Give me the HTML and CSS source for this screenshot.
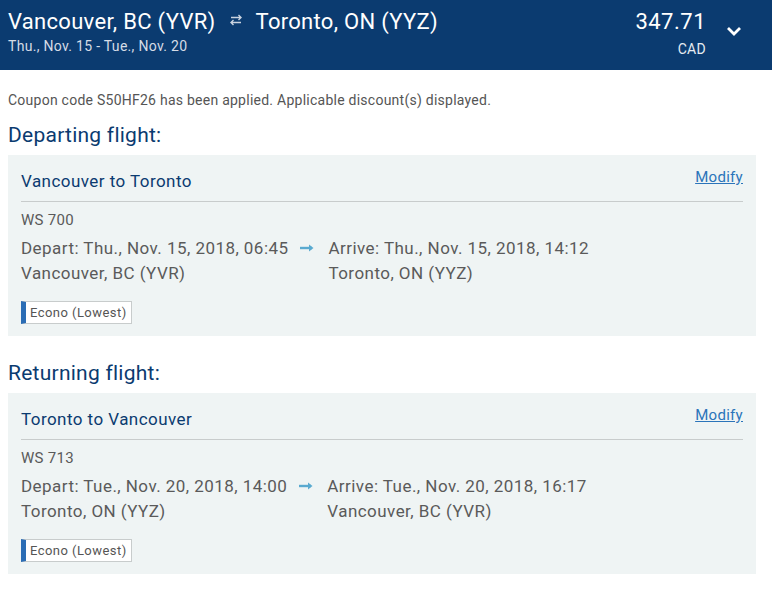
FILE: index.html
```html
<!DOCTYPE html>
<html>
<head>
<meta charset="utf-8">
<link rel="stylesheet" href="styles.css">
</head>
<body>
<header class="topbar">
  <div class="trip">
    <div class="route">
      <span>Vancouver, BC (YVR)</span>
      <svg class="swap" width="16" height="12" viewBox="0 0 16 12"><path d="M3 3.5H13M10.5 1L13 3.5L10.5 6M13 8.5H3M5.5 6L3 8.5L5.5 11" fill="none" stroke="#c9d3e0" stroke-width="1.4"/></svg>
      <span>Toronto, ON (YYZ)</span>
    </div>
    <div class="dates">Thu., Nov. 15 - Tue., Nov. 20</div>
  </div>
  <div class="price">
    <div class="amount">347.71</div>
    <div class="currency">CAD</div>
  </div>
  <svg class="chev" width="16" height="12" viewBox="0 0 16 12"><path d="M2 3L8 9L14 3" fill="none" stroke="#fff" stroke-width="2.8"/></svg>
</header>

<main class="content">
  <p class="coupon">Coupon code S50HF26 has been applied. Applicable discount(s) displayed.</p>

  <h2 class="section">Departing flight:</h2>
  <section class="card">
    <div class="card-head">
      <h3 class="card-title">Vancouver to Toronto</h3>
      <a class="modify" href="#">Modify</a>
    </div>
    <div class="flightno">WS 700</div>
    <div class="legs">
      <div class="leg dep">
        <div>Depart: Thu., Nov. 15, 2018, 06:45</div>
        <div>Vancouver, BC (YVR)</div>
      </div>
      <svg class="arrow" width="15" height="10" viewBox="0 0 15 10"><path d="M0 5H12" stroke="#5aaad0" stroke-width="2.4"/><path d="M9 1.5L13.5 5L9 8.5Z" fill="#5aaad0"/></svg>
      <div class="leg">
        <div>Arrive: Thu., Nov. 15, 2018, 14:12</div>
        <div>Toronto, ON (YYZ)</div>
      </div>
    </div>
    <span class="fare">Econo (Lowest)</span>
  </section>

  <h2 class="section">Returning flight:</h2>
  <section class="card">
    <div class="card-head">
      <h3 class="card-title">Toronto to Vancouver</h3>
      <a class="modify" href="#">Modify</a>
    </div>
    <div class="flightno">WS 713</div>
    <div class="legs">
      <div class="leg dep">
        <div>Depart: Tue., Nov. 20, 2018, 14:00</div>
        <div>Toronto, ON (YYZ)</div>
      </div>
      <svg class="arrow" width="15" height="10" viewBox="0 0 15 10"><path d="M0 5H12" stroke="#5aaad0" stroke-width="2.4"/><path d="M9 1.5L13.5 5L9 8.5Z" fill="#5aaad0"/></svg>
      <div class="leg">
        <div>Arrive: Tue., Nov. 20, 2018, 16:17</div>
        <div>Vancouver, BC (YVR)</div>
      </div>
    </div>
    <span class="fare">Econo (Lowest)</span>
  </section>
</main>
</body>
</html>
```
FILE: styles.css
```css
* { box-sizing: border-box; }
body {
  margin: 0;
  font-family: Roboto, "Liberation Sans", sans-serif;
  background: #fff;
  color: #5a5a5a;
}
.topbar {
  background: #0b3b70;
  height: 70px;
  display: flex;
  align-items: flex-start;
  padding: 9px 30px 0 8px;
  color: #fff;
}
.trip { flex: 1; }
.route {
  display: flex;
  align-items: center;
  gap: 12px;
  font-size: 22px;
  line-height: 26px;
  letter-spacing: 0.3px;
}
.swap { margin-top: -4px; }
.dates {
  margin-top: 3px;
  font-size: 14px;
  line-height: 16px;
  color: #d5dce6;
  letter-spacing: 0.3px;
}
.price { text-align: right; }
.amount { font-size: 22px; line-height: 26px; letter-spacing: 0.5px; }
.currency { margin-top: 4px; font-size: 14px; line-height: 20px; color: #e6ebf2; letter-spacing: 0.3px; }
.chev { margin: 16px 0 0 20px; }

.content { padding: 0 16px 0 8px; }
.coupon {
  margin: 22px 0 0;
  font-size: 14px;
  line-height: 16px;
  letter-spacing: 0.25px;
  color: #555;
}
.section {
  margin: 13px 0 0;
  font-size: 21px;
  line-height: 28px;
  font-weight: 400;
  letter-spacing: 0.25px;
  color: #0b3b70;
}
.card {
  margin-top: 6px;
  background: #eff4f4;
  padding: 12px 13px 12px 13px;
  height: 181px;
}
.card + .section { margin-top: 23px; }
.card-head {
  display: flex;
  justify-content: space-between;
  align-items: flex-start;
  border-bottom: 1px solid #c8cccc;
  padding-bottom: 8px;
}
.card-title {
  margin: 2px 0 0;
  font-size: 17px;
  line-height: 24px;
  font-weight: 400;
  letter-spacing: 0.45px;
  color: #0b3b70;
}
.modify {
  font-size: 15px;
  line-height: 20px;
  letter-spacing: 0.3px;
  color: #2b74ba;
  text-decoration: underline;
}
.flightno {
  margin-top: 8px;
  font-size: 15px;
  line-height: 20px;
  letter-spacing: 0.3px;
  color: #5a5a5a;
}
.legs {
  display: flex;
  align-items: flex-start;
  margin-top: 6px;
  font-size: 17px;
  line-height: 25px;
  letter-spacing: 0.45px;
  color: #5a5a5a;
}
.arrow { margin: 7px 13px 0 12px; }
.fare {
  display: inline-block;
  margin-top: 15px;
  background: #fff;
  border: 1px solid #c8cccc;
  border-left: 5px solid #2b6db5;
  font-size: 13px;
  line-height: 19px;
  letter-spacing: 0.45px;
  padding: 1px 4px 1px 4px;
  color: #555;
}
```
